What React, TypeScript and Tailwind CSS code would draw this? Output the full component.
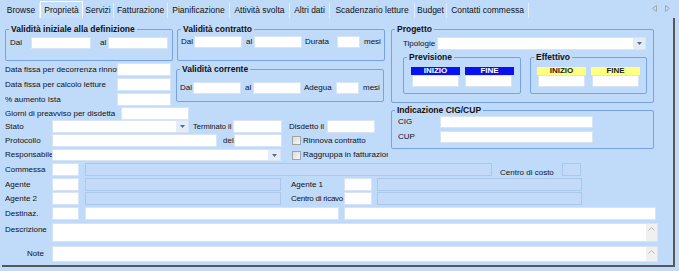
import React from 'react';

const tabs = [
  { label: 'Browse', w: 'w-[37px]' },
  { label: 'Proprietà', w: 'w-[43px]', active: true },
  { label: 'Servizi', w: 'w-[31px]' },
  { label: 'Fatturazione', w: 'w-[54px]' },
  { label: 'Pianificazione', w: 'w-[62px]' },
  { label: 'Attività svolta', w: 'w-[60px]' },
  { label: 'Altri dati', w: 'w-[40px]' },
  { label: 'Scadenzario letture', w: 'w-[85px]' },
  { label: 'Budget', w: 'w-[32px]' },
  { label: 'Contatti commessa', w: 'w-[82px]' },
];

// white text field
const Field = ({ className = '' }: { className?: string }) => (
  <div className={`shrink-0 bg-white border border-[#d6e4f6] ${className}`} />
);

// greyed-out (disabled) field
const Off = ({ className = '' }: { className?: string }) => (
  <div className={`shrink-0 bg-[#c3dbf9] border border-[#aac7ec] ${className}`} />
);

const Label = ({ children, className = '' }: { children: React.ReactNode; className?: string }) => (
  <span className={`shrink-0 whitespace-nowrap overflow-hidden leading-[10px] ${className}`}>{children}</span>
);

const Combo = ({ className = '' }: { className?: string }) => (
  <div className={`shrink-0 flex bg-white border border-[#d6e4f6] ${className}`}>
    <div className="flex-1" />
    <div className="w-[12px] h-full bg-[#e4ecf6] flex items-center justify-center">
      <svg width="5" height="3" viewBox="0 0 5 3">
        <path d="M0 0H5L2.5 3Z" fill="#4d6c98" />
      </svg>
    </div>
  </div>
);

const Check = ({ label }: { label: string }) => (
  <div className="flex items-center gap-[2px] whitespace-nowrap">
    <div className="shrink-0 w-[9px] h-[9px] border border-[#a3a3a3] bg-gradient-to-br from-[#dcdcdc] to-[#f8f8f8]" />
    <span className="leading-[10px]">{label}</span>
  </div>
);

const Memo = ({ className = '' }: { className?: string }) => (
  <div className={`flex bg-white border border-[#d6e4f6] ${className}`}>
    <div className="flex-1" />
    <div className="w-[11px] h-full bg-[#f0f0f0] flex justify-center pt-[3px]">
      <svg width="7" height="4" viewBox="0 0 7 4">
        <path d="M0.5 3.5L3.5 0.5L6.5 3.5" fill="none" stroke="#b5b5b5" strokeWidth="1" />
      </svg>
    </div>
  </div>
);

const Group = ({ title, className = '', children }: { title: string; className?: string; children?: React.ReactNode }) => (
  <fieldset className={`shrink-0 border border-[#76a3e6] rounded-[2px] ${className}`}>
    <legend className="ml-[3px] px-[2px] font-bold text-[8.5px] leading-[10px] text-[#111]">{title}</legend>
    {children}
  </fieldset>
);

const Head = ({ text, yellow }: { text: string; yellow?: boolean }) => (
  <div
    className={`w-[49px] h-[8px] flex items-center justify-center font-bold text-[8px] leading-[8px] ${
      yellow ? 'bg-[#ffff80] text-[#222]' : 'bg-[#0a12f2] text-white'
    }`}
  >
    {text}
  </div>
);

export default function App() {
  return (
    <div className="w-[679px] h-[271px] bg-[#c0daf9] overflow-hidden font-['Liberation_Sans',Arial,sans-serif] text-[8px] text-[#111]">
      {/* tab strip */}
      <div className="h-[18px] flex items-end pl-[3px]">
        {tabs.map((t) => (
          <div
            key={t.label}
            className={`${t.w} flex items-center justify-center text-[8.5px] whitespace-nowrap ${
              t.active
                ? 'h-[17px] border-l border-t border-r border-white bg-[#c6defa]'
                : 'h-[15px] border-r border-[#e2edfc]'
            }`}
          >
            {t.label}
          </div>
        ))}
        <div className="flex-1" />
        <div className="flex items-center gap-[8px] h-[15px] pr-[9px] pb-[4px]">
          <svg width="5" height="7" viewBox="0 0 5 7">
            <path d="M4.5 0.5V6.5L0.5 3.5Z" fill="none" stroke="#a0a8b4" />
          </svg>
          <svg width="5" height="7" viewBox="0 0 5 7">
            <path d="M0.5 0.5V6.5L4.5 3.5Z" fill="none" stroke="#a0a8b4" />
          </svg>
        </div>
      </div>

      {/* page */}
      <div className="ml-[2px] w-[673px] h-[249px] border-r-2 border-b-2 border-[#575757] pl-[3px] pt-[6px]">
        <div className="flex">
          {/* left column */}
          <div className="w-[386px] shrink-0">
            <div className="flex gap-[4px]">
              <Group title="Validità iniziale alla definizione" className="w-[168px] h-[37px]">
                <div className="flex items-center mt-[3px] pl-[4px]">
                  <Label className="w-[21px]">Dal</Label>
                  <Field className="w-[60px] h-[12px]" />
                  <Label className="w-[17px] pl-[9px]">al</Label>
                  <Field className="w-[60px] h-[12px]" />
                </div>
              </Group>
              <Group title="Validità contratto" className="w-[208px] h-[37px]">
                <div className="flex items-center mt-[2px] pl-[3px]">
                  <Label className="w-[13px]">Dal</Label>
                  <Field className="w-[48px] h-[12px]" />
                  <Label className="w-[12px] pl-[4px]">al</Label>
                  <Field className="w-[48px] h-[12px]" />
                  <Label className="w-[35px] pl-[3px]">Durata</Label>
                  <Field className="w-[23px] h-[12px]" />
                  <Label className="pl-[4px]">mesi</Label>
                </div>
              </Group>
            </div>

            <div className="flex mt-[2px]">
              <div className="w-[171px] shrink-0 flex flex-col gap-[2px]">
                <div className="flex items-center h-[13px]">
                  <Label className="w-[112px]">Data fissa per decorrenza rinnovo</Label>
                  <Field className="w-[54px] h-[13px]" />
                </div>
                <div className="flex items-center h-[13px]">
                  <Label className="w-[112px]">Data fissa per calcolo letture</Label>
                  <Field className="w-[54px] h-[13px]" />
                </div>
                <div className="flex items-center h-[13px]">
                  <Label className="w-[112px]">% aumento Ista</Label>
                  <Field className="w-[54px] h-[13px]" />
                </div>
              </div>
              <Group title="Validità corrente" className="w-[208px] h-[38px] mt-[1px]">
                <div className="flex items-center mt-[8px] pl-[3px]">
                  <Label className="w-[13px]">Dal</Label>
                  <Field className="w-[48px] h-[12px]" />
                  <Label className="w-[12px] pl-[4px]">al</Label>
                  <Field className="w-[48px] h-[12px]" />
                  <Label className="w-[35px] pl-[3px]">Adegua</Label>
                  <Field className="w-[23px] h-[12px]" />
                  <Label className="pl-[4px]">mesi</Label>
                </div>
              </Group>
            </div>

            <div className="flex items-center h-[13px] mt-[1px]">
              <Label className="w-[116px]">Giorni di preavviso per disdetta</Label>
              <Field className="w-[68px] h-[13px]" />
            </div>

            <div className="flex items-center h-[13px]">
              <Label className="w-[47px]">Stato</Label>
              <Combo className="w-[137px] h-[13px]" />
              <Label className="w-[44px] pl-[4px] text-[7.5px]">Terminato il</Label>
              <Field className="w-[49px] h-[13px]" />
              <Label className="w-[45px] pl-[7px]">Disdetto il</Label>
              <Field className="w-[48px] h-[13px]" />
            </div>

            <div className="flex items-center h-[13px] mt-[1px]">
              <Label className="w-[47px]">Protocollo</Label>
              <Field className="w-[165px] h-[13px]" />
              <Label className="w-[17px] pl-[6px]">del</Label>
              <Field className="w-[48px] h-[13px]" />
              <div className="ml-[10px] w-[96px] overflow-hidden">
                <Check label="Rinnova contratto" />
              </div>
            </div>

            <div className="flex items-center h-[12px] mt-[2px]">
              <Label className="w-[47px]">Responsabile</Label>
              <Combo className="w-[229px] h-[12px]" />
              <div className="ml-[11px] w-[96px] overflow-hidden">
                <Check label="Raggruppa in fatturazione" />
              </div>
            </div>
          </div>

          {/* right column */}
          <div className="w-[263px] shrink-0 flex flex-col gap-[2px]">
            <Group title="Progetto" className="w-[263px] h-[79px]">
              <div className="flex items-center mt-[3px] pl-[11px]">
                <Label className="w-[34px]">Tipologie</Label>
                <Combo className="w-[209px] h-[13px]" />
              </div>
              <div className="flex gap-[9px] mt-[2px] pl-[11px]">
                <Group title="Previsione" className="w-[118px] h-[42px]">
                  <div className="flex gap-[5px] pl-[7px] mt-[5px]">
                    <div className="flex flex-col items-start">
                      <Head text="INIZIO" />
                      <Field className="w-[47px] h-[12px] ml-[1px]" />
                    </div>
                    <div className="flex flex-col items-start">
                      <Head text="FINE" />
                      <Field className="w-[47px] h-[12px]" />
                    </div>
                  </div>
                </Group>
                <Group title="Effettivo" className="w-[117px] h-[42px]">
                  <div className="flex gap-[5px] pl-[6px] mt-[5px]">
                    <div className="flex flex-col items-start">
                      <Head text="INIZIO" yellow />
                      <Field className="w-[47px] h-[12px] ml-[1px]" />
                    </div>
                    <div className="flex flex-col items-start">
                      <Head text="FINE" yellow />
                      <Field className="w-[47px] h-[12px] ml-[1px]" />
                    </div>
                  </div>
                </Group>
              </div>
            </Group>
            <Group title="Indicazione CIG/CUP" className="w-[263px] h-[44px]">
              <div className="flex items-center mt-[1px] pl-[6px]">
                <Label className="w-[42px]">CIG</Label>
                <Field className="w-[153px] h-[12px]" />
              </div>
              <div className="flex items-center mt-[3px] pl-[6px]">
                <Label className="w-[42px]">CUP</Label>
                <Field className="w-[153px] h-[12px]" />
              </div>
            </Group>
          </div>
        </div>

        {/* lower rows */}
        <div className="flex items-center h-[13px] mt-[2px]">
          <Label className="w-[47px]">Commessa</Label>
          <Field className="w-[27px] h-[13px]" />
          <Off className="w-[407px] h-[13px] ml-[6px]" />
          <Label className="w-[70px] pl-[8px] pt-[6px]">Centro di costo</Label>
          <Off className="w-[19px] h-[13px]" />
        </div>
        <div className="flex items-center h-[13px] mt-[2px]">
          <Label className="w-[47px]">Agente</Label>
          <Field className="w-[27px] h-[13px]" />
          <Off className="w-[196px] h-[13px] ml-[6px]" />
          <Label className="w-[63px] pl-[10px]">Agente 1</Label>
          <Field className="w-[28px] h-[13px]" />
          <Off className="w-[205px] h-[13px] ml-[5px]" />
        </div>
        <div className="flex items-center h-[13px] mt-[1px]">
          <Label className="w-[47px]">Agente 2</Label>
          <Field className="w-[27px] h-[13px]" />
          <Off className="w-[196px] h-[13px] ml-[6px]" />
          <Label className="w-[63px] pl-[10px] tracking-[-0.25px]">Centro di ricavo</Label>
          <Field className="w-[28px] h-[13px]" />
          <Off className="w-[205px] h-[13px] ml-[5px]" />
        </div>
        <div className="flex items-center h-[13px] mt-[2px]">
          <Label className="w-[47px]">Destinaz.</Label>
          <Field className="w-[27px] h-[13px]" />
          <Field className="w-[254px] h-[13px] ml-[6px]" />
          <Field className="w-[312px] h-[13px] ml-[5px]" />
        </div>
        <div className="flex items-start mt-[3px]">
          <Label className="w-[47px] pt-[2px]">Descrizione</Label>
          <Memo className="w-[606px] h-[19px]" />
        </div>
        <div className="flex items-center mt-[4px]">
          <Label className="w-[47px] pr-[8px] text-right">Note</Label>
          <Memo className="w-[606px] h-[16px]" />
        </div>
      </div>
    </div>
  );
}
